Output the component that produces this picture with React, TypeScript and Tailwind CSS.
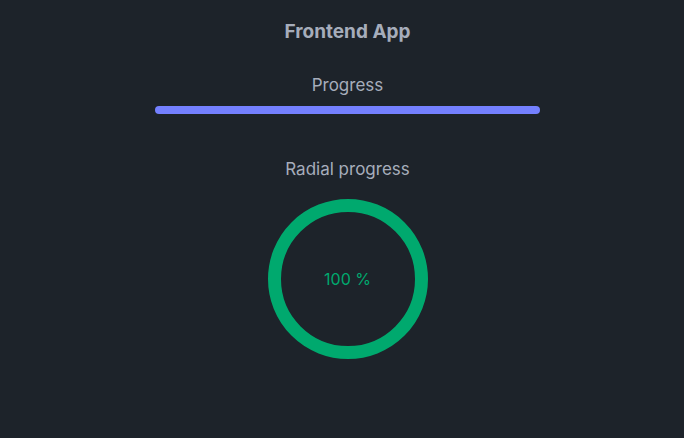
export default function App() {
  return (
    <div className="min-h-screen w-full bg-[#1d232a] text-[#a6adbb] font-['Inter',sans-serif]">
      <div className="flex flex-col items-center pl-[11px] pt-[18px]">
        <h1 className="text-[19px] font-bold leading-7">Frontend App</h1>
        <h2 className="mt-[27px] text-[17px] leading-6">Progress</h2>
        <div className="mt-[9px] h-2 w-[385px] rounded-full bg-[#7480ff]" />
        <h2 className="mt-[43px] text-[17px] leading-6">Radial progress</h2>
        <div className="mt-[18px] flex h-[160px] w-[160px] items-center justify-center rounded-full border-[13px] border-[#00a96e]">
          <span className="text-base text-[#00a96e]">100 %</span>
        </div>
      </div>
    </div>
  );
}
